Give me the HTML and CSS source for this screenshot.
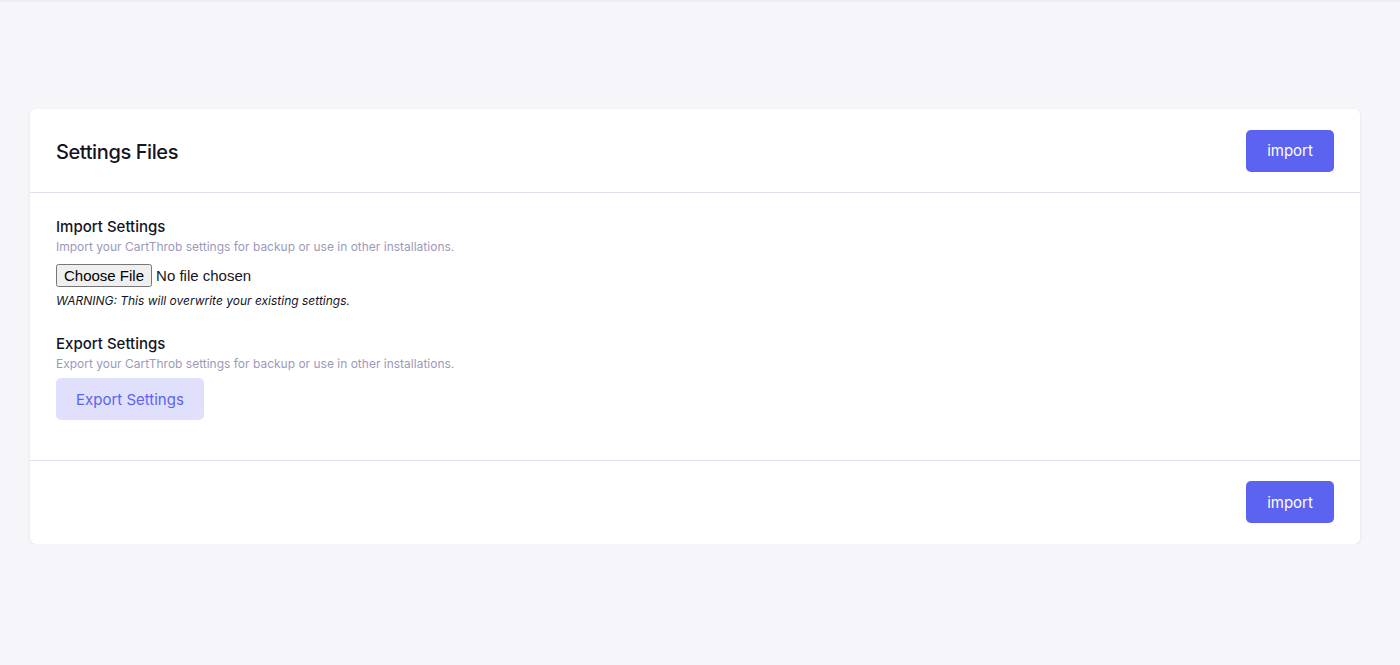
FILE: index.html
```html
<!DOCTYPE html>
<html lang="en">
<head>
  <meta charset="UTF-8">
  <meta name="viewport" content="width=device-width, initial-scale=1.0">
  <title>Settings Files</title>
  <link rel="stylesheet" href="styles.css">
</head>
<body>
  <div class="topbar"></div>
  <main class="page">
    <form class="card">
      <div class="card-header">
        <h1>Settings Files</h1>
        <button type="button" class="btn-primary">import</button>
      </div>

      <div class="card-body">
        <div class="field">
          <h2>Import Settings</h2>
          <p class="hint">Import your CartThrob settings for backup or use in other installations.</p>
          <input type="file" class="file-input">
          <p class="warning">WARNING: This will overwrite your existing settings.</p>
        </div>

        <div class="field export">
          <h2>Export Settings</h2>
          <p class="hint">Export your CartThrob settings for backup or use in other installations.</p>
          <button type="button" class="btn-secondary">Export Settings</button>
        </div>
      </div>

      <div class="card-footer">
        <button type="button" class="btn-primary">import</button>
      </div>
    </form>
  </main>
</body>
</html>
```

FILE: styles.css
```css
body {
  font-family: Inter, "Noto Sans", sans-serif;
  background-color: #f6f5fa;
  color: #15141f;
  margin: 0;
  padding: 0;
}

.topbar {
  height: 3px;
  background: linear-gradient(#ecebf2, #f6f5fa);
}

.page {
  padding: 106px 40px 0 30px;
}

.card {
  background-color: #fff;
  border-radius: 6px;
  box-shadow: 0 1px 3px rgba(30, 30, 60, 0.1);
}

.card-header {
  display: flex;
  align-items: center;
  justify-content: space-between;
  height: 83px;
  padding: 0 26px;
  border-bottom: 1px solid #e2e1ef;
}

.card-header h1 {
  margin: 0;
  padding-top: 2px;
  font-size: 20px;
  font-weight: 500;
  letter-spacing: -0.4px;
}

.btn-primary {
  width: 88px;
  height: 42px;
  border: none;
  border-radius: 5px;
  background-color: #5c63f1;
  color: #fff;
  font-family: inherit;
  font-size: 15px;
  cursor: pointer;
}

.btn-primary:hover {
  background-color: #4b52e0;
}

.card-body {
  padding: 24px 26px 40px;
}

.field h2 {
  margin: 0;
  font-size: 15px;
  line-height: 20px;
  font-weight: 500;
}

.hint {
  margin: 2px 0 0;
  font-size: 12px;
  line-height: 16px;
  color: #9c9aba;
}

.file-input {
  display: block;
  margin-top: 9px;
  font-family: "Liberation Sans", Arial, sans-serif;
  font-size: 15px;
}

.warning {
  margin: 6px 0 0;
  font-size: 12px;
  line-height: 16px;
  font-style: italic;
}

.export {
  margin-top: 25px;
}

.btn-secondary {
  display: block;
  margin-top: 6px;
  height: 42px;
  padding: 0 20px;
  border: none;
  border-radius: 5px;
  background-color: #e0e0fc;
  color: #5c63f1;
  font-family: inherit;
  font-size: 15px;
  cursor: pointer;
}

.card-footer {
  display: flex;
  justify-content: flex-end;
  padding: 20px 26px 21px;
  border-top: 1px solid #e2e1ef;
}
```
